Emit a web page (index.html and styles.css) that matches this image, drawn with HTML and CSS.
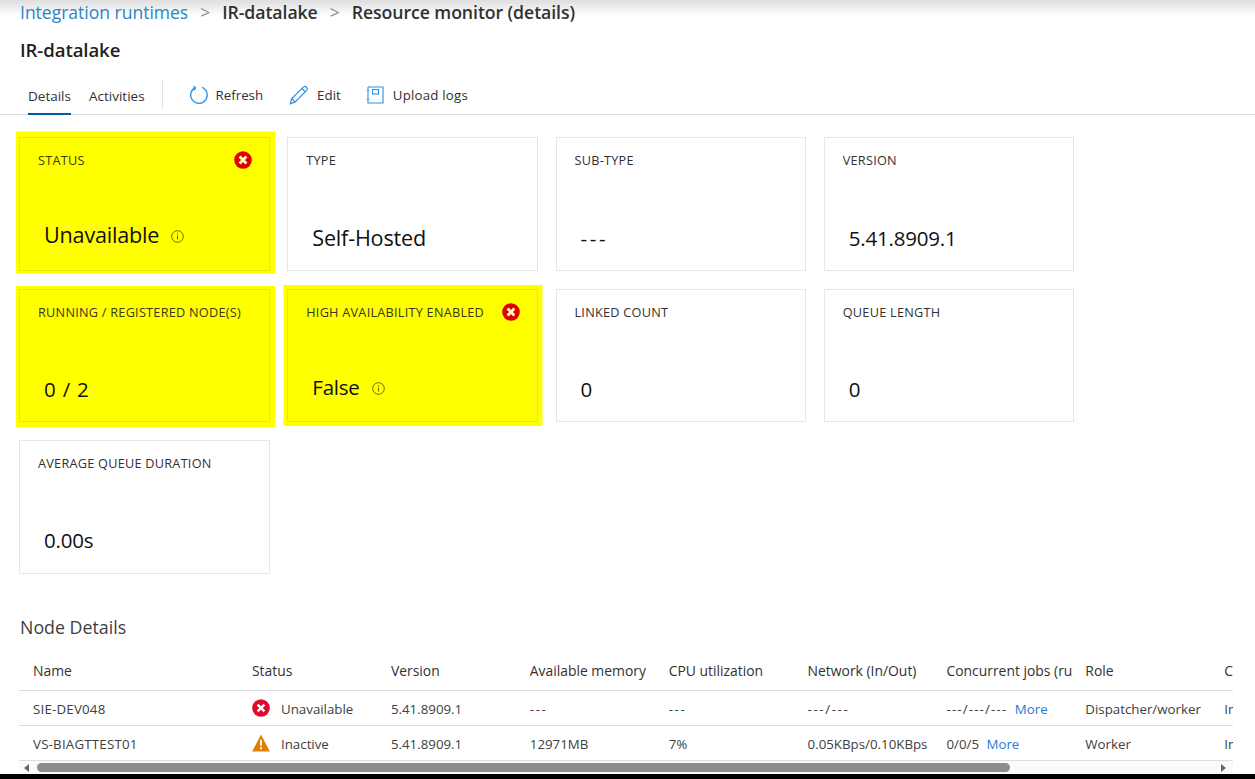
FILE: index.html
```html
<!DOCTYPE html>
<html lang="en">
<head>
<meta charset="utf-8">
<title>Resource monitor (details)</title>
<link rel="stylesheet" href="styles.css">
</head>
<body>
<div class="top-shade"></div>
<main class="page">
  <nav class="crumbs">
    <a class="crumb-link">Integration runtimes</a>
    <span class="crumb-sep">&gt;</span>
    <span class="crumb">IR-datalake</span>
    <span class="crumb-sep">&gt;</span>
    <span class="crumb">Resource monitor (details)</span>
  </nav>
  <h1 class="title">IR-datalake</h1>
  <div class="toolbar">
    <div class="tabs">
      <span class="tab active">Details</span>
      <span class="tab">Activities</span>
    </div>
    <div class="divider"></div>
    <div class="actions">
      <span class="action refresh">
        <svg class="act-icon" width="20" height="20" viewBox="0 0 20 20" fill="none" stroke="#2f8fe0" stroke-width="1.2"><path d="M6.2 2.6A8.3 8.3 0 1 0 13 2.3"/><path d="M4.5 0.8 L6.6 2.9 L5 5.4"/></svg>
        Refresh
      </span>
      <span class="action edit">
        <svg class="act-icon" width="20" height="20" viewBox="0 0 20 20" fill="none" stroke="#2f8fe0" stroke-width="1.2"><path d="M1.3 18.7 L2.7 13.6 L14.6 1.9 Q16 0.8 17.6 2.2 Q19 3.8 17.9 5.2 L6.2 17 Z"/><path d="M2.7 13.6 L6.2 17"/><path d="M13 3.5 L16.3 6.8"/></svg>
        Edit
      </span>
      <span class="action upload">
        <svg class="act-icon" width="18" height="18" viewBox="0 0 18 18" fill="none" stroke="#2f8fe0" stroke-width="1.1"><path d="M2 1 H17 V17 H2 V1"/><path d="M0.5 4.5 H3.5 M0.5 13.5 H3.5" stroke="#7aaede"/><rect x="6.5" y="3.5" width="6" height="4.5"/></svg>
        Upload logs
      </span>
    </div>
  </div>

  <section class="cards">
    <article class="card glow glow-a">
      <div class="card-label">STATUS</div>
      <svg class="err card-err" width="18" height="18" viewBox="0 0 18 18"><circle cx="9" cy="9" r="8.8" fill="#e00000"/><path d="M5.6 5.6 L12.4 12.4 M12.4 5.6 L5.6 12.4" stroke="#ffffc0" stroke-width="2.8"/></svg>
      <div class="card-value strong tall"><span>Unavailable</span>
        <svg class="info" width="13" height="13" viewBox="0 0 13 13" fill="none" stroke="#5c5c00"><circle cx="6.5" cy="6.5" r="5.8" stroke-width="0.9"/><path d="M6.5 5.6 V9.6 M6.5 3.4 V4.5" stroke-width="0.9"/></svg>
      </div>
    </article>
    <article class="card">
      <div class="card-label">TYPE</div>
      <div class="card-value wide strong">Self-Hosted</div>
    </article>
    <article class="card">
      <div class="card-label">SUB-TYPE</div>
      <div class="card-value wide"><span class="dash big">---</span></div>
    </article>
    <article class="card">
      <div class="card-label">VERSION</div>
      <div class="card-value wide">5.41.8909.1</div>
    </article>

    <article class="card glow glow-b">
      <div class="card-label">RUNNING / REGISTERED NODE(S)</div>
      <div class="card-value low spaced">0 / 2</div>
    </article>
    <article class="card glow glow-c">
      <div class="card-label">HIGH AVAILABILITY ENABLED</div>
      <svg class="err card-err" width="18" height="18" viewBox="0 0 18 18"><circle cx="9" cy="9" r="8.8" fill="#e00000"/><path d="M5.6 5.6 L12.4 12.4 M12.4 5.6 L5.6 12.4" stroke="#ffffc0" stroke-width="2.8"/></svg>
      <div class="card-value tall"><span>False</span>
        <svg class="info" width="13" height="13" viewBox="0 0 13 13" fill="none" stroke="#5c5c00"><circle cx="6.5" cy="6.5" r="5.8" stroke-width="0.9"/><path d="M6.5 5.6 V9.6 M6.5 3.4 V4.5" stroke-width="0.9"/></svg>
      </div>
    </article>
    <article class="card">
      <div class="card-label">LINKED COUNT</div>
      <div class="card-value low">0</div>
    </article>
    <article class="card">
      <div class="card-label">QUEUE LENGTH</div>
      <div class="card-value low">0</div>
    </article>

    <article class="card">
      <div class="card-label">AVERAGE QUEUE DURATION</div>
      <div class="card-value low">0.00s</div>
    </article>
  </section>

  <h2 class="section-title">Node Details</h2>
  <div class="table-wrap">
    <table class="nodes">
      <colgroup>
        <col class="c-name"><col class="c-std"><col class="c-std"><col class="c-std"><col class="c-std"><col class="c-std"><col class="c-std"><col class="c-std"><col class="c-std">
      </colgroup>
      <thead>
        <tr><th>Name</th><th>Status</th><th>Version</th><th>Available memory</th><th>CPU utilization</th><th>Network (In/Out)</th><th><span class="clip">Concurrent jobs (running/limit)</span></th><th>Role</th><th>Credential</th></tr>
      </thead>
      <tbody>
        <tr>
          <td class="name">SIE-DEV048</td>
          <td><span class="st"><svg width="18" height="18" viewBox="0 0 18 18"><circle cx="9" cy="9" r="8.8" fill="#e00b2c"/><path d="M5.6 5.6 L12.4 12.4 M12.4 5.6 L5.6 12.4" stroke="#fff" stroke-width="2.4"/></svg>Unavailable</span></td>
          <td>5.41.8909.1</td><td><span class="dash">---</span></td><td><span class="dash">---</span></td><td><span class="dash">---/---</span></td>
          <td><span class="dash tight">---/---/---</span> <a class="more">More</a></td>
          <td>Dispatcher/worker</td><td>In sync</td>
        </tr>
        <tr>
          <td class="name">VS-BIAGTTEST01</td>
          <td><span class="st"><svg width="18" height="18" viewBox="0 0 18 18"><path d="M9 0.5 L17.8 17.4 H0.2 Z" fill="#e37c00"/><path d="M9 5.8 V11.8 M9 13.2 V15.2" stroke="#fff" stroke-width="2"/></svg>Inactive</span></td>
          <td>5.41.8909.1</td><td>12971MB</td><td>7%</td><td>0.05KBps/0.10KBps</td>
          <td>0/0/5 <a class="more">More</a></td>
          <td>Worker</td><td>In sync</td>
        </tr>
      </tbody>
    </table>
    <div class="scrollbar">
      <span class="arrow left"></span>
      <span class="thumb"></span>
      <span class="arrow right"></span>
    </div>
  </div>
</main>
<div class="bottom-edge"></div>
</body>
</html>
```
FILE: styles.css
```css
* { box-sizing: border-box; }
html, body { margin: 0; height: 779px; overflow: hidden; background: #fff; }
body { font-family: "Open Sans", "Noto Sans", "Liberation Sans", sans-serif; color: #323130; }

.top-shade {
  position: absolute; left: 0; top: 0; right: 0; height: 16px;
  background: linear-gradient(#dedede, #fff);
}
.page { position: relative; }

.crumbs { display: flex; align-items: center; height: 24px; padding-left: 20px; font-size: 17.5px; white-space: nowrap; }
.crumb-link { color: #2b83c9; }
.crumb { color: #323130; font-weight: 600; font-size: 17.7px; letter-spacing: -0.08px; }
.crumb-sep { color: #8a8886; margin: 0 12px; }

.title { margin: 13px 0 0 20px; height: 26px; font-size: 18.6px; line-height: 26px; font-weight: 600; color: #1f1f1f; letter-spacing: -0.1px; }

.toolbar { display: flex; align-items: flex-start; height: 43px; margin-top: 9px; border-bottom: 1px solid #dcdcdc; padding-left: 28px; }
.tabs { display: flex; gap: 18px; height: 43px; }
.tab { font-size: 13.5px; height: 43px; line-height: 15px; padding-top: 17px; }
.tab.active { border-bottom: 2px solid #005b9f; }
.divider { width: 1px; height: 30px; background: #e4e4e4; margin: 8px 0 0 17px; }
.actions { display: flex; align-items: center; height: 22px; margin: 12px 0 0 26px; }
.action { display: inline-flex; align-items: center; font-size: 13.3px; gap: 7px; }
.act-icon { flex: none; }
.refresh { margin-right: 26px; }
.edit { margin-right: 25px; gap: 8px; }
.upload { gap: 9px; letter-spacing: 0.2px; }

.cards {
  display: grid; grid-template-columns: repeat(4, 250.5px); grid-auto-rows: 133.5px;
  column-gap: 17.75px; row-gap: 18px; padding: 22px 0 0 19px;
}
.card { position: relative; display: flex; flex-direction: column; border: 1px solid #e6e6e6; padding: 14px 18px 0; background: #fff; }
.glow { background: #ff0; border-color: #e8e800; }
.glow-a { box-shadow: 1px -1.5px 0 4px #ff0; }
.glow-b { box-shadow: 1px 1px 0 4px #ff0; }
.glow-c { box-shadow: 0.5px 0 0 4px #ff0; }
.card-label { font-size: 12.7px; line-height: 16px; color: #323130; letter-spacing: 0.25px; white-space: nowrap; }
.glow .card-label { color: #3a3a10; }
.card-err { position: absolute; right: 17px; top: 13px; }
.card-value { display: flex; align-items: center; margin-top: 52px; font-size: 20.5px; font-weight: 500; line-height: 30px; color: #111; padding-left: 6px; letter-spacing: -0.2px; }
.card-value.strong { font-size: 21.6px; }
.card-value.tall { margin-top: 52px; }
.card-value.wide { margin-top: 55px; }
.card-value.low { margin-top: 54px; }
.spaced { word-spacing: 2px; }
.dash { letter-spacing: 1.6px; }
.dash.big { letter-spacing: 2.6px; }
.dash.tight { letter-spacing: 1.15px; }
.info { margin-left: 12px; margin-top: 3px; }

.section-title { margin: 40px 0 0 20px; height: 26px; font-size: 17.8px; line-height: 26px; font-weight: 400; color: #404040; }

.table-wrap { width: 1214px; margin: 15px 0 0 19px; overflow: hidden; }
.nodes { table-layout: fixed; width: 1344.2px; border-collapse: separate; border-spacing: 0; font-size: 13.3px; }
.c-name { width: 233px; }
.c-std { width: 138.9px; }
.nodes th, .nodes td { padding: 0; text-align: left; white-space: nowrap; overflow: hidden; border-bottom: 1px solid #dcdcdc; }
.nodes tr > *:first-child { padding-left: 14px; }
.nodes th { height: 36px; padding-bottom: 4px; font-weight: 500; font-size: 13.9px; color: #323130; }
.nodes td { height: 35px; padding-top: 2px; color: #404040; }
.nodes td.name { letter-spacing: 0.2px; }
.clip { display: block; overflow: hidden; margin-right: 13px; }
.st { display: flex; align-items: center; gap: 11px; }
.st svg { margin-top: -2px; }
.more { color: #1f7ad6; margin-left: 4px; }

.scrollbar { display: flex; align-items: center; height: 14px; background: #fafafa; padding: 0 3px; }
.arrow { width: 0; height: 0; border-top: 4px solid transparent; border-bottom: 4px solid transparent; flex: none; }
.arrow.left { border-right: 5px solid #666; margin-right: 7px; margin-left: 2px; }
.arrow.right { border-left: 5px solid #666; margin-left: auto; margin-right: 4px; }
.thumb { width: 973px; height: 9px; border-radius: 5px; background: #8c8c8c; margin-left: 1px; }

.bottom-edge { position: absolute; left: 0; right: 0; top: 774px; height: 5px; background: #000; }
```
